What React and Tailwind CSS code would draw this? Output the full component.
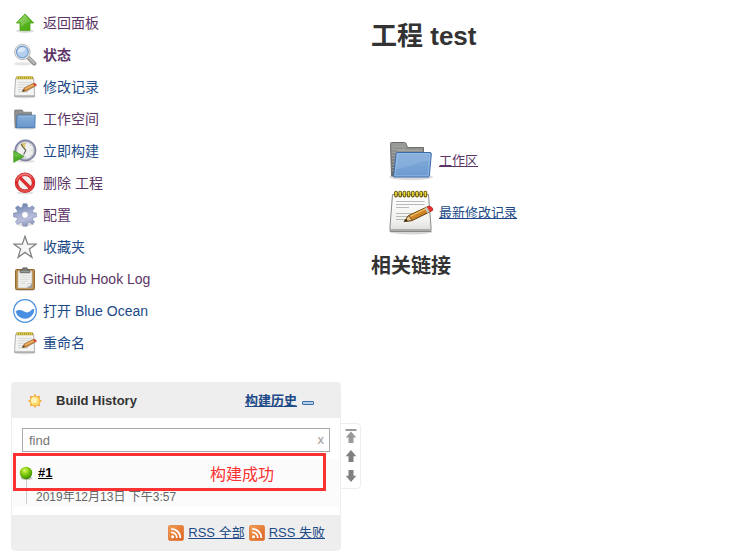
import React from "react";

function UpIcon() {
  return (
    <svg viewBox="0 0 24 24" className="size-6 shrink-0" aria-hidden="true">
      <defs>
        <linearGradient id="up" x1="0" y1="0" x2="1" y2="1">
          <stop offset="0" stopColor="#93d457" />
          <stop offset="0.5" stopColor="#56b51f" />
          <stop offset="1" stopColor="#4cab0c" />
        </linearGradient>
      </defs>
      <ellipse cx="12" cy="20" rx="9" ry="1.9" fill="#000" opacity="0.13" />
      <path d="M12 2.9 20.7 12H17V19.6H7V12H3.3Z" fill="url(#up)" stroke="#4fa21a" strokeWidth="0.8" strokeLinejoin="round" />
      <path d="M12 4.3 17.5 10.5C13 11 11 14 8 15.5V11H5.5Z" fill="#fff" opacity="0.2" />
    </svg>
  );
}

function SearchIcon() {
  return (
    <svg viewBox="0 0 24 24" className="size-6 shrink-0" aria-hidden="true">
      <ellipse cx="10" cy="20.8" rx="9" ry="1.8" fill="#000" opacity="0.1" />
      <path d="M15 14.4 21.3 20.4" stroke="#8c8e8c" strokeWidth="4.2" strokeLinecap="round" />
      <path d="M15 14.2 21.2 20" stroke="#b9bbb9" strokeWidth="2.2" strokeLinecap="round" />
      <circle cx="9.4" cy="9" r="7.8" fill="#ededeb" stroke="#b1b3b0" strokeWidth="0.9" />
      <circle cx="9.4" cy="9" r="5.9" fill="#b5d0ee" stroke="#7399cc" strokeWidth="1.2" />
      <path d="M4.6 9.5C4.2 5.5 8.5 3 12.6 5 12.4 8 8.5 10 4.6 9.5Z" fill="#fff" opacity="0.5" />
    </svg>
  );
}

function NotepadIcon() {
  return (
    <svg viewBox="0 0 24 24" className="size-6 shrink-0" aria-hidden="true">
      <ellipse cx="12" cy="22" rx="10.5" ry="1.4" fill="#000" opacity="0.12" />
      <path d="M2.7 3H20.6L21.6 18.6V21.6H1.6V18.6Z" fill="#f3f3f2" stroke="#aaaca8" strokeWidth="0.9" strokeLinejoin="round" />
      <path d="M1.8 20.9H21.4" stroke="#a3a5a1" strokeWidth="1.1" />
      <path d="M3.5 2.8H20" stroke="#a08e22" strokeWidth="2.8" />
      <path d="M4 2.8H20" stroke="#dfcb49" strokeWidth="2.4" strokeDasharray="1.2 0.8" />
      <path d="M5 7.5H18.5M5 9.8H16M5 12.3H12M5 14.5H10M5 16.8H15" stroke="#d2d2d1" strokeWidth="0.9" />
      <path d="M9.2 16.5 11.5 12.8 20.5 8.3Q22.4 7.9 23.4 10.3L13.4 16Z" fill="#d29145" stroke="#8a5a26" strokeWidth="0.7" strokeLinejoin="round" />
      <path d="M12.3 13.7 20.2 9.7" stroke="#f1bb6c" strokeWidth="1.1" />
      <path d="M9.2 16.5 11 14.2 11.7 15.9Z" fill="#4f3a1d" />
      <path d="M20 8.6 20.8 8.2Q23 7.8 23.6 10.2L21.9 11.2Z" fill="#e4483c" />
    </svg>
  );
}

function LargeNotepadIcon() {
  const rings = [9, 13.2, 17.4, 21.6, 25.8, 30, 34.2, 38.4];
  return (
    <svg viewBox="0 0 48 48" className="size-12 shrink-0" aria-hidden="true">
      <defs>
        <linearGradient id="paper" x1="0" y1="0" x2="0" y2="1">
          <stop offset="0" stopColor="#fff" />
          <stop offset="0.7" stopColor="#f1f1f0" />
          <stop offset="1" stopColor="#dcdcda" />
        </linearGradient>
      </defs>
      <ellipse cx="24" cy="43" rx="21" ry="2.4" fill="#000" opacity="0.16" />
      <path d="M5.5 5.5H41.5L44 38V42.5H3V38Z" fill="url(#paper)" stroke="#888a85" strokeWidth="1" strokeLinejoin="round" />
      <path d="M3.5 41H43.5" stroke="#999b96" strokeWidth="1.4" />
      <g fill="#5a4b00">
        {rings.map((x) => (
          <rect key={x} x={x - 1.8} y="1.8" width="3.6" height="6.6" rx="1.7" />
        ))}
      </g>
      <g fill="#ecd83c">
        {rings.map((x) => (
          <rect key={x} x={x - 0.9} y="2.4" width="1.8" height="5" rx="0.8" />
        ))}
      </g>
      <path d="M9 12.5H37.5M9 15.5H37.5M9 18.5H22M9 24.5H29M9 27.5H25M9 30.5H20" stroke="#b9b9b7" strokeWidth="1.1" />
      <path d="M17.2 32.5 21.7 26.5 41 17.5C43 16.5 46.5 19 45.5 21.5L25.2 31.5Z" fill="#ca8327" stroke="#654112" strokeWidth="1" strokeLinejoin="round" />
      <path d="M23 27.4 40 19.3" stroke="#efb95b" strokeWidth="1.6" />
      <path d="M17.2 32.5 21.7 26.5 25.2 31.5Z" fill="#e8c88f" stroke="#654112" strokeWidth="0.8" />
      <path d="M17.2 32.5 19.2 29.8 20.7 32.1Z" fill="#312411" />
      <path d="M37.8 19 40 18 42.8 22.8 40.4 24Z" fill="#c6c8c4" />
      <path d="M40 18C42.5 16 46.5 18.3 45.6 21.4L42.8 22.8Z" fill="#e92e32" />
    </svg>
  );
}

function FolderIcon() {
  return (
    <svg viewBox="0 0 24 24" className="size-6 shrink-0" aria-hidden="true">
      <defs>
        <linearGradient id="small-folder" x1="0" y1="0" x2="0" y2="1">
          <stop offset="0" stopColor="#88afd9" />
          <stop offset="1" stopColor="#6896ce" />
        </linearGradient>
      </defs>
      <ellipse cx="12" cy="21" rx="11" ry="1.7" fill="#000" opacity="0.12" />
      <path d="M2 20.5 1.5 3.5Q1.5 3 2 3H9.2L10.5 5.2H18.5V20.5Z" fill="#898b89" stroke="#777977" strokeWidth="0.7" />
      <path d="M2.5 5H9.5M2.5 7H4M2.5 9H4M2.5 11H4" stroke="#a8aaa8" strokeWidth="0.6" />
      <path d="M4.2 8.2H22.2L21.8 20.8H3.4Z" fill="url(#small-folder)" stroke="#4574b1" strokeWidth="0.9" strokeLinejoin="round" />
      <path d="M5 9.1H21.3" stroke="#adcaea" strokeWidth="0.7" />
    </svg>
  );
}

function LargeFolderIcon() {
  return (
    <svg viewBox="0 0 48 48" className="size-12 shrink-0" aria-hidden="true">
      <defs>
        <linearGradient id="folder" x1="0" y1="0" x2="0" y2="1">
          <stop offset="0" stopColor="#7fabdb" />
          <stop offset="0.5" stopColor="#78a4d6" />
          <stop offset="1" stopColor="#6c9bd2" />
        </linearGradient>
        <linearGradient id="back" x1="0" y1="0" x2="0" y2="1">
          <stop offset="0" stopColor="#9b9d9a" />
          <stop offset="1" stopColor="#676967" />
        </linearGradient>
      </defs>
      <ellipse cx="24" cy="40" rx="22" ry="3.3" fill="#000" opacity="0.14" />
      <path d="M4.5 39 3.5 6.5Q3.5 5.5 4.5 5.5H17.5Q19 5.5 19.5 7.5L20.5 10.5H36.5V39Z" fill="url(#back)" stroke="#6b6d6a" strokeWidth="1" />
      <path d="M5 9.5H18M5 12.5H18M5 15.5H9M5 18.5H9M5 21.5H9M5 24.5H9M5 27.5H8M5 30.5H8M5 33.5H7" stroke="#a5a7a4" strokeWidth="0.7" />
      <path d="M10.5 13.5H34.5" stroke="#a8aaa7" strokeWidth="0.9" />
      <path d="M9.2 16.5Q9.3 15.5 10.5 15.5H43Q44.4 15.5 44.3 17L42.4 38.5Q42.2 40 41 40H7.5Q6.5 40 6.6 38.8Z" fill="url(#folder)" stroke="#3c6bab" strokeWidth="1" />
      <path d="M10.2 16.7H43L41.2 38.8H7.9Z" fill="none" stroke="#a9c8e9" strokeWidth="0.7" opacity="0.8" />
      <path d="M10 17.2H42.5L42 24C31 24 24 31 8.8 32Z" fill="#fff" opacity="0.1" />
    </svg>
  );
}

function ClockIcon() {
  return (
    <svg viewBox="0 0 24 24" className="size-6 shrink-0" aria-hidden="true">
      <ellipse cx="13" cy="22.2" rx="9" ry="1.4" fill="#000" opacity="0.12" />
      <circle cx="12.4" cy="11.4" r="10.7" fill="#8486a5" stroke="#72758f" strokeWidth="0.5" />
      <circle cx="12.4" cy="11.4" r="9.4" fill="#b4b6cb" />
      <circle cx="12.4" cy="11.4" r="8.6" fill="#efefed" stroke="#aaabb9" strokeWidth="0.6" />
      <path d="M12.2 10.5 7.2 6Q9.5 3.9 12.2 3.8Z" fill="#e5cb68" />
      <path d="M8.5 5 9.5 7.5 12.8 11.4 10.6 15.5" fill="none" stroke="#5b5c55" strokeWidth="1.1" />
      <path d="M12.4 4V5M19.5 11.4H18.5M12.4 18.8V17.8M17.6 6.2 17 6.8M17.6 16.6 17 16" stroke="#999" strokeWidth="0.8" />
      <path d="M0.7 11.8 11.2 17.4 0.7 23.5Z" fill="#4cae25" stroke="#3d911b" strokeWidth="0.6" strokeLinejoin="round" />
      <path d="M1.4 13.1 9.3 17.3 1.4 18Z" fill="#9bda68" opacity="0.4" />
    </svg>
  );
}

function DeleteIcon() {
  return (
    <svg viewBox="0 0 24 24" className="size-6 shrink-0" aria-hidden="true">
      <defs>
        <linearGradient id="deny" x1="0" y1="0" x2="0" y2="1">
          <stop offset="0" stopColor="#e95555" />
          <stop offset="0.5" stopColor="#df2828" />
          <stop offset="1" stopColor="#e44a49" />
        </linearGradient>
      </defs>
      <ellipse cx="12" cy="21.8" rx="8.5" ry="1.6" fill="#000" opacity="0.12" />
      <circle cx="12" cy="11.7" r="8.5" fill="#f4eeee" stroke="#c42929" strokeWidth="3.4" />
      <path d="M6.2 5.9 17.8 17.5" stroke="#c42929" strokeWidth="3.2" />
      <circle cx="12" cy="11.7" r="8.5" fill="none" stroke="url(#deny)" strokeWidth="2.5" />
      <path d="M6 5.7 18 17.7" stroke="#e13030" strokeWidth="2.3" />
      <path d="M3.7 9.5A8.7 8.7 0 0 1 18.7 6.2" fill="none" stroke="#fff" strokeWidth="0.8" opacity="0.35" />
    </svg>
  );
}

function GearIcon() {
  return (
    <svg viewBox="0 0 24 24" className="size-6 shrink-0" aria-hidden="true">
      <defs>
        <linearGradient id="gear" x1="0.3" y1="0" x2="0.6" y2="1">
          <stop offset="0" stopColor="#6a83ad" />
          <stop offset="0.45" stopColor="#a5add0" />
          <stop offset="0.7" stopColor="#b9bfdb" />
          <stop offset="1" stopColor="#8793ba" />
        </linearGradient>
      </defs>
      <ellipse cx="12" cy="21.3" rx="9" ry="1.8" fill="#000" opacity="0.12" />
      <path
        d="M10 0.8H14L14.6 4 16.4 4.8 19.4 2.8 21.6 5 19.5 7.8 20 9.6 23.4 10.1V13.9L20 14.4 19.5 16.2 21.6 19 19.4 21.2 16.4 19.2 14.6 20 14 23.2H10L9.4 20 7.6 19.2 4.6 21.2 2.4 19 4.5 16.2 4 14.4 0.6 13.9V10.1L4 9.6 4.5 7.8 2.4 5 4.6 2.8 7.6 4.8 9.4 4Z"
        fill="url(#gear)"
        stroke="#7886ae"
        strokeWidth="0.6"
        strokeLinejoin="round"
      />
      <circle cx="12" cy="12" r="3.4" fill="#fff" stroke="#8d97bd" strokeWidth="0.7" />
    </svg>
  );
}

function StarIcon() {
  return (
    <svg viewBox="0 0 24 24" className="size-6 shrink-0" aria-hidden="true">
      <path d="M12 1.3 14.7 9.2H22.9L16.4 14.1 18.9 22.3 12 17.4 5.1 22.3 7.6 14.1 1.1 9.2H9.3Z" fill="#f6f6f6" stroke="#828282" strokeWidth="1.3" strokeLinejoin="miter" />
    </svg>
  );
}

function ClipboardIcon() {
  return (
    <svg viewBox="0 0 24 24" className="size-6 shrink-0" aria-hidden="true">
      <ellipse cx="12" cy="23" rx="10.5" ry="0.9" fill="#000" opacity="0.18" />
      <rect x="2.5" y="2.5" width="19" height="20" rx="1" fill="#b98a45" stroke="#956b33" strokeWidth="1" />
      <path d="M5 4H19V21H5Z" fill="#efefed" stroke="#c5bba9" strokeWidth="0.7" />
      <path d="M7 8.5H17M7 10.5H17M7 12.5H17M7 14.5H15M7 16.5H13" stroke="#dcdcda" strokeWidth="0.9" />
      <path d="M19 16.5 14.3 21H19Z" fill="#9d9f9b" />
      <path d="M19 16.5 15.2 16.9 14.3 21Z" fill="#fff" stroke="#aaa" strokeWidth="0.5" />
      <path d="M7.2 5.8V4Q7.2 3 8.4 3H9.5V1.8Q9.5 0.8 10.5 0.8H13.5Q14.5 0.8 14.5 1.8V3H15.6Q16.8 3 16.8 4V5.8Z" fill="#777a75" stroke="#5c5e5a" strokeWidth="0.7" />
      <path d="M8 4.4H16" stroke="#a5a7a2" strokeWidth="0.8" />
    </svg>
  );
}

function OceanIcon() {
  return (
    <svg viewBox="0 0 24 24" className="size-6 shrink-0" aria-hidden="true">
      <circle cx="12" cy="12" r="11.3" fill="#fff" stroke="#4a90e2" strokeWidth="1.2" />
      <path d="M2.6 12.6C4.5 10.6 7.5 10.6 10.2 12.1 13.2 14 15.4 14 17.6 11.8 18.9 10.3 20.2 9.8 21.3 10.2A9.5 9.5 0 0 1 2.6 12.6Z" fill="#4a90e2" />
    </svg>
  );
}

function SunIcon() {
  return (
    <svg viewBox="0 0 16 16" className="size-4 shrink-0" aria-hidden="true">
      <path d="M8 0.8 9.5 3.4 13 2.8 12.5 6.5 15.3 8 12.5 9.5 13 13.2 9.5 12.6 8 15.2 6.5 12.6 3 13.2 3.5 9.5 0.7 8 3.5 6.5 3 2.8 6.5 3.4Z" fill="#f4a63b" />
      <circle cx="8" cy="8" r="4.8" fill="#fddc6c" stroke="#f3b344" strokeWidth="0.7" />
      <circle cx="7.2" cy="7.2" r="3" fill="#fff3b8" />
    </svg>
  );
}

function BallIcon() {
  return (
    <svg viewBox="0 0 16 16" className="size-4 shrink-0" aria-hidden="true">
      <defs>
        <radialGradient id="ball" cx="0.4" cy="0.3" r="0.75">
          <stop offset="0" stopColor="#d9f46f" />
          <stop offset="0.35" stopColor="#94d51b" />
          <stop offset="0.75" stopColor="#52a800" />
          <stop offset="1" stopColor="#357600" />
        </radialGradient>
      </defs>
      <ellipse cx="8.5" cy="13.2" rx="6" ry="1.8" fill="#000" opacity="0.18" />
      <circle cx="8" cy="8" r="6.2" fill="url(#ball)" />
    </svg>
  );
}

function RssIcon() {
  return (
    <svg viewBox="0 0 16 16" className="size-4 shrink-0" aria-hidden="true">
      <defs>
        <linearGradient id="rss" x1="0" y1="0" x2="1" y2="1">
          <stop offset="0" stopColor="#f0a35c" />
          <stop offset="0.5" stopColor="#e67e38" />
          <stop offset="1" stopColor="#d8642c" />
        </linearGradient>
      </defs>
      <rect x="0.4" y="0.4" width="15.2" height="15.2" rx="2" fill="url(#rss)" stroke="#de772f" strokeWidth="0.8" />
      <circle cx="4.6" cy="11.7" r="1.5" fill="#fff" />
      <path d="M3.2 7.3A5.7 5.7 0 0 1 8.9 13M3.2 3.8A9.2 9.2 0 0 1 12.4 13" fill="none" stroke="#fff" strokeWidth="1.8" />
    </svg>
  );
}

function PagerArrow({ kind }) {
  return (
    <svg viewBox="0 0 12 16" className="h-4 w-3" aria-hidden="true">
      {kind === "top" && <path d="M0.5 1H11.5V3H0.5ZM6 3.5 11.3 9.5H8.5V15H3.5V9.5H0.7Z" fill="#999" />}
      {kind === "up" && <path d="M6 2 11.3 8.2H8.5V14H3.5V8.2H0.7Z" fill="#808080" />}
      {kind === "down" && <path d="M6 14 11.3 7.8H8.5V2H3.5V7.8H0.7Z" fill="#808080" />}
    </svg>
  );
}

const visited = "text-[#5c3566]";
const fresh = "text-[#204a87]";

const tasks = [
  { label: "返回面板", Icon: UpIcon, tone: visited },
  { label: "状态", Icon: SearchIcon, tone: "font-bold text-[#5c3566]" },
  { label: "修改记录", Icon: NotepadIcon, tone: fresh },
  { label: "工作空间", Icon: FolderIcon, tone: visited },
  { label: "立即构建", Icon: ClockIcon, tone: fresh },
  { label: "删除 工程", Icon: DeleteIcon, tone: visited },
  { label: "配置", Icon: GearIcon, tone: visited },
  { label: "收藏夹", Icon: StarIcon, tone: fresh },
  { label: "GitHub Hook Log", Icon: ClipboardIcon, tone: visited },
  { label: "打开 Blue Ocean", Icon: OceanIcon, tone: fresh },
  { label: "重命名", Icon: NotepadIcon, tone: fresh },
];

function BuildHistory() {
  return (
    <section className="relative mt-[23px] rounded-[4px] border border-[#eee] bg-white">
      <header className="flex h-[35px] items-center bg-[#eee] pr-[26px] pl-[15px]">
        <SunIcon />
        <h2 className="ml-[13px] text-[13px] font-bold text-[#333]">Build History</h2>
        <a href="#trend" className="ml-auto text-[13px] font-bold text-[#204a87] underline">构建历史</a>
        <button type="button" aria-label="收起" className="mt-1 ml-[5px] h-1 w-3 rounded-[1px] border border-[#3b6ea5] bg-[#b4cfe8]" />
      </header>
      <div className="mx-2.5 mt-[10px] flex h-6 items-center border border-[#aaa] bg-white">
        <input
          type="text"
          aria-label="find"
          placeholder="find"
          className="h-full min-w-0 flex-1 px-1.5 text-[13px] text-[#333] outline-none placeholder:text-[#757575]"
        />
        <button type="button" aria-label="清除" className="px-[5px] text-[13px] text-[#999]">x</button>
      </div>
      <div className="relative mt-[7px] h-12 bg-[#fbfbfb] pt-1 pl-1.5">
        <div className="absolute top-5 left-3.5 h-[25px] w-px bg-[#ccc]" />
        <div className="relative flex h-5 items-center gap-1">
          <BallIcon />
          <a href="#1" className="text-[13px] font-bold text-black underline">#1</a>
        </div>
        <a href="#1" className="mt-1 ml-[18px] block text-[12px] leading-5 text-[#666]">2019年12月13日 下午3:57</a>
        <div className="absolute -top-1.5 right-3.5 left-px flex h-[38px] items-center justify-end border-3 border-[#fb3232] pt-1.5 pr-[49px] text-[16px] text-[#fb3232]">
          构建成功
        </div>
      </div>
      <footer className="mt-2 flex h-[35px] items-center justify-end gap-1 bg-[#eee] pr-[15px] text-[13px] text-[#204a87]">
        <RssIcon />
        <a href="#rss-all" className="underline">RSS 全部</a>
        <RssIcon />
        <a href="#rss-failed" className="underline">RSS 失败</a>
      </footer>
      <nav aria-label="分页" className="absolute top-10 left-full flex h-[66px] w-[21px] flex-col items-center justify-center gap-1 rounded-r-[4px] border border-[#eee] bg-white">
        <button type="button" aria-label="最新"><PagerArrow kind="top" /></button>
        <button type="button" aria-label="较新"><PagerArrow kind="up" /></button>
        <button type="button" aria-label="较旧"><PagerArrow kind="down" /></button>
      </nav>
    </section>
  );
}

export default function App() {
  return (
    <div className="flex bg-white font-['Liberation_Sans','Noto_Sans_CJK_SC',sans-serif] text-[#333]">
      <aside className="w-[341px] shrink-0 pt-[7px] pb-2 pl-[11px]">
        <ul>
          {tasks.map(({ label, Icon, tone }) => (
            <li key={label} className="h-8">
              <a href="#task" className={`flex h-8 items-center gap-1.5 pl-0.5 text-[14px] ${tone}`}>
                <Icon />
                <span>{label}</span>
              </a>
            </li>
          ))}
        </ul>
        <BuildHistory />
      </aside>
      <main className="min-w-0 flex-1 pt-4 pl-[30px]">
        <h1 className="text-[26px] leading-10 font-bold">工程 test</h1>
        <ul className="mt-[81px] flex flex-col gap-1 pl-4 text-[13px]">
          <li className="flex items-center gap-1">
            <LargeFolderIcon />
            <a href="#workspace" className="text-[#5c3566] underline">工作区</a>
          </li>
          <li className="flex items-center gap-1">
            <LargeNotepadIcon />
            <a href="#changes" className="text-[#204a87] underline">最新修改记录</a>
          </li>
        </ul>
        <h2 className="mt-[13px] text-[20px] leading-8 font-bold">相关链接</h2>
      </main>
    </div>
  );
}
